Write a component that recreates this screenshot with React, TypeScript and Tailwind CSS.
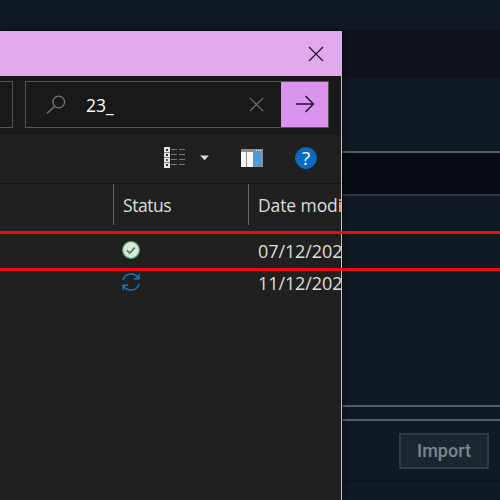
import React from "react";

function Backdrop() {
  return (
    <div className="flex h-full flex-col bg-[#101a23]">
      <div className="h-[30px] shrink-0" />
      <div className="h-[49px] shrink-0 bg-[#0f121b]" />
      <div className="h-[72px] shrink-0" />
      <div className="h-[45px] shrink-0 border-y-2 border-t-[#555d65] border-b-[#2c333b] bg-[#070b12]" />
      <div className="h-[209px] shrink-0" />
      <div className="h-4 shrink-0 border-y-2 border-[#555e69]" />
      <div className="flex h-[60px] shrink-0 items-start justify-end border-b border-[#0c141b] pt-3 pr-[11px]">
        <button className="h-9 w-[90px] border-2 border-[#323b44] bg-[#1b262f] font-[family-name:'Roboto','Liberation_Sans',sans-serif] text-[18px] leading-8 font-medium text-[#7d8791]">
          Import
        </button>
      </div>
    </div>
  );
}

function TitleBar() {
  return (
    <div className="flex h-[45px] shrink-0 items-center justify-end bg-[#e2a8ed] pr-[17px]">
      <svg width="16" height="16" viewBox="0 0 16 16" fill="none" stroke="#160b1b" strokeWidth="1.1">
        <path d="M1 1l14 14M15 1L1 15" />
      </svg>
    </div>
  );
}

function SearchRow() {
  return (
    <div className="flex h-[59px] shrink-0 bg-[#191919] pt-[5px]">
      <div className="h-[47px] w-[13px] border border-l-0 border-[#555]" />
      <div className="ml-3 flex h-[47px] w-[304px] items-center border border-[#555]">
        <svg className="ml-[20px] shrink-0" width="20" height="20" viewBox="0 0 20 20" fill="none" stroke="#777" strokeWidth="1.3">
          <circle cx="12.8" cy="7" r="5.8" />
          <path d="M8.6 11.2L1 18.5" />
        </svg>
        <span className="ml-5 w-[163px] pt-px text-[17.5px] text-white">23_</span>
        <svg className="shrink-0" width="15" height="15" viewBox="0 0 15 15" fill="none" stroke="#777" strokeWidth="1.2">
          <path d="M.8.8l13.4 13.4M14.2.8L.8 14.2" />
        </svg>
        <div className="ml-auto flex h-[45px] w-[47px] shrink-0 items-center justify-center bg-[#dc93ed]">
          <svg className="-mt-[2px]" width="20" height="18" viewBox="0 0 20 18" fill="none" stroke="#240f2b" strokeWidth="1.4">
            <path d="M1 9h17.5M10.5 1l8 8-8 8" />
          </svg>
        </div>
      </div>
    </div>
  );
}

function Toolbar() {
  return (
    <div className="flex h-[49px] shrink-0 items-center border-b border-[#151515] pb-[2px]">
      <svg className="ml-[164px]" width="22" height="22" viewBox="0 0 22 22">
        <path fill="#e4e4e4" d="M0 0h6v21H0z" />
        <path stroke="#888" strokeWidth="1" d="M0 5.5h6M0 10.5h6M0 15.5h6" />
        <path fill="#333" d="M2 2h2v2H2zM2 7h2v2H2zM2 17h2v2H2z" />
        <path fill="#a04e38" d="M2 12h2v2H2z" />
        <path stroke="#777" d="M7 2.5h6M15 2.5h6M7 7.5h6M15 7.5h6M7 12.5h6M15 12.5h6M7 17.5h6M15 17.5h6" />
      </svg>
      <svg className="ml-[14px]" width="9" height="6" viewBox="0 0 9 6">
        <path fill="#d8d8d8" d="M0 .5h9L4.5 5.2z" />
      </svg>
      <svg className="ml-8" width="22" height="18" viewBox="0 0 22 18">
        <path fill="#8e8e8e" d="M0 0h22v18H0z" />
        <path fill="#f7f7f7" d="M0 3h5v15H0zM6 3h6v15H6z" />
        <path fill="#489de4" d="M12 3h9v14h-9z" />
        <path fill="#ddd" d="M15 1h1v1h-1zM17 1h1v1h-1zM19 1h1v1h-1z" />
      </svg>
      <div className="ml-[32px] flex h-[22px] w-[22px] items-center justify-center rounded-full border border-[#1864a8] bg-[#0b6bc4] text-[19px] leading-5 font-medium text-white">
        ?
      </div>
    </div>
  );
}

function ListHeader() {
  return (
    <div className="flex h-[41px] shrink-0 text-[17.5px] leading-[43px] text-[#dedede]">
      <div className="w-[113px] shrink-0" />
      <div className="w-[135px] shrink-0 border-l border-[#666] pl-[9px] tracking-[-0.45px]">Status</div>
      <div className="shrink-0 border-l border-[#666] pl-[9px] tracking-[-0.1px] whitespace-nowrap">Date modified</div>
    </div>
  );
}

function FileRow({ date, synced }: { date: string; synced?: boolean }) {
  return (
    <div className="flex h-8 shrink-0 items-center text-[18px] leading-8 tracking-[-0.1px] text-[#dedede]">
      <svg className="-mt-[3px] ml-[121px] shrink-0" width="20" height="20" viewBox="0 0 20 20" fill="none">
        {synced ? (
          <>
            <circle cx="10" cy="10" r="8.5" fill="#dce6dc" stroke="#3c9a50" strokeWidth="1.2" />
            <path d="M6 10.3l2.8 2.7 5-5.4" stroke="#328343" strokeWidth="1.6" />
          </>
        ) : (
          <path
            d="M2 8C3.2 4.2 6.3 2 10 2c3.3 0 6 1.6 7.4 4.2M18 1.7v5.1h-5.3M18 12c-1.2 3.8-4.3 6-8 6-3.3 0-6-1.6-7.4-4.2M2 18.3v-5.1h5.3"
            stroke="#1977bd"
            strokeWidth="1.4"
          />
        )}
      </svg>
      <span className="-mt-px ml-[117px] whitespace-nowrap">{date}</span>
    </div>
  );
}

export default function App() {
  return (
    <main className="relative h-[500px] w-[500px] overflow-hidden">
      <Backdrop />
      <section className="absolute top-[31px] left-0 flex h-[469px] w-[342px] flex-col overflow-hidden border-r border-[#e2ace9] bg-[#202020] font-[family-name:'Open_Sans',sans-serif] shadow-[0_0_5px_#05090d]">
        <TitleBar />
        <SearchRow />
        <Toolbar />
        <ListHeader />
        <div className="h-[10px] shrink-0" />
        <FileRow date="07/12/2023" synced />
        <FileRow date="11/12/2023" />
      </section>
      <div className="absolute top-[231px] left-0 h-10 w-[500px] border-y-[3px] border-[#ee0b0d]" />
    </main>
  );
}
